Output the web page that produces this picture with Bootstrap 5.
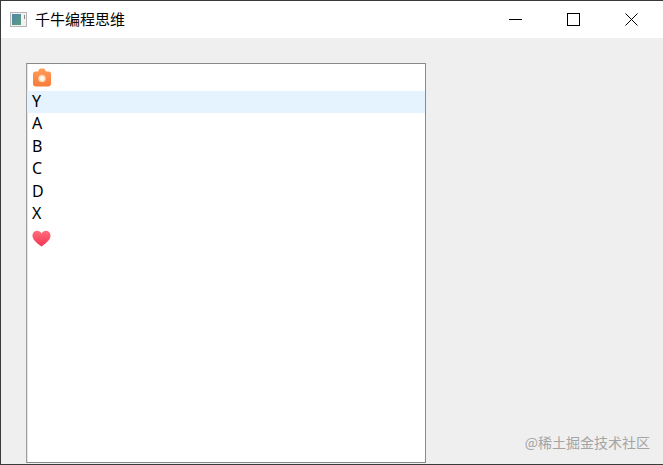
<!DOCTYPE html>
<html lang="zh">
<head>
<meta charset="utf-8">
<title>千牛编程思维</title>
<link rel="stylesheet" href="https://cdn.jsdelivr.net/npm/bootstrap@5.3.0/dist/css/bootstrap.min.css">
<style>
html,body{height:100%;margin:0;overflow:hidden}
body{background:#efefef;font-family:"Noto Sans","Noto Sans CJK SC",sans-serif;color:#000}
.win-frame{height:465px;width:663px;border:solid #3a3a3a;border-width:1px 0 1px 1px}
.title-bar{height:37px;background:#fff;padding-right:3px}
.app-ico{margin-left:9px;margin-right:8px}
.app-name{font-family:"Noto Sans CJK SC",sans-serif;font-size:15px;line-height:20px;margin-top:-1px}
.cap-btn{width:58px;height:37px}
.cap-btn svg{display:block}
.win-body{padding:25px 0 0 25px;height:426px}
.qlist{width:400px;height:400px;background:#fff;border:1px solid #8a8a8a;border-left-color:#a0a0a0;border-radius:0;box-shadow:inset 1px 0 0 #e4e4e4;padding-top:4px;font-family:"Noto Sans",sans-serif;font-size:16px;line-height:20px}
.qitem{height:22.500px;padding:0 0 0 5px;background:transparent;border:0;border-radius:0;color:#000}
.qitem.first{height:23px}
.qitem.on{height:22px;background:#e5f3ff}
.qitem.last{padding-top:4px}
.qitem svg{display:block}
.wm{position:absolute;right:13px;bottom:13px;font-family:"Noto Sans CJK SC",sans-serif;font-size:14px;line-height:18px;color:#a4a4a4}
</style>
</head>
<body>
<div class="win-frame position-relative d-flex flex-column">
  <div class="title-bar d-flex align-items-center">
    <svg class="app-ico" width="17" height="15" viewBox="0 0 17 15"><rect x=".5" y=".5" width="16" height="14" fill="#f2f2f2" stroke="#b5b5b5"/><defs><linearGradient id="ag" x1="0" y1="0" x2="1" y2="1"><stop offset="0" stop-color="#4f86b0"/><stop offset="1" stop-color="#5c9c78"/></linearGradient></defs><rect x="2" y="2" width="9" height="11" fill="url(#ag)"/><rect x="14" y="3" width="1" height="4" fill="#8a8a8a"/></svg>
    <span class="app-name flex-grow-1">千牛编程思维</span>
    <div class="cap-btn d-flex align-items-center justify-content-center"><svg width="13" height="13" viewBox="0 0 13 13"><path d="M0 6.500H13" stroke="#000"/></svg></div>
    <div class="cap-btn d-flex align-items-center justify-content-center"><svg width="13" height="13" viewBox="0 0 13 13"><rect x=".5" y=".5" width="12" height="12" fill="none" stroke="#000"/></svg></div>
    <div class="cap-btn d-flex align-items-center justify-content-center"><svg width="13" height="13" viewBox="0 0 13 13"><path d="M.5 .5L12.500 12.500M12.500 .5L.5 12.500" stroke="#000"/></svg></div>
  </div>
  <div class="win-body">
    <div class="qlist list-group">
      <div class="qitem first list-group-item"><svg width="20" height="19" viewBox="0 0 20 19"><defs><linearGradient id="cg" x1="0" y1="0" x2="0" y2="1"><stop offset="0" stop-color="#ff9d58"/><stop offset="1" stop-color="#f87a38"/></linearGradient><radialGradient id="lg"><stop offset=".45" stop-color="#fff6ea"/><stop offset="1" stop-color="#ffc79a"/></radialGradient></defs><path d="M3.500 3.500H6L7.200 1.200a1.500 1.500 0 0 1 1.300-.7h3a1.500 1.500 0 0 1 1.300.7L14 3.500h2.500A2.500 2.500 0 0 1 19 6v9.500a3 3 0 0 1-3 3H4a3 3 0 0 1-3-3V6a2.500 2.500 0 0 1 2.500-2.500z" fill="url(#cg)"/><circle cx="10" cy="10.500" r="3.800" fill="url(#lg)"/></svg></div>
      <div class="qitem on list-group-item">Y</div>
      <div class="qitem list-group-item">A</div>
      <div class="qitem list-group-item">B</div>
      <div class="qitem list-group-item">C</div>
      <div class="qitem list-group-item">D</div>
      <div class="qitem list-group-item">X</div>
      <div class="qitem last list-group-item"><svg width="19" height="17" viewBox="0 0 19 17"><defs><linearGradient id="hg" x1="0" y1="0" x2="0" y2="1"><stop offset="0" stop-color="#ff6f7d"/><stop offset="1" stop-color="#f2344f"/></linearGradient></defs><path d="M9.500 16.500C4 12.500.5 9.500.5 5.500.5 2.500 2.800.8 5 .8c2 0 3.500 1 4.500 2.700C10.500 1.800 12 .8 14 .8c2.200 0 4.500 1.700 4.500 4.700 0 4-3.500 7-9 11z" fill="url(#hg)"/></svg></div>
    </div>
  </div>
  <div class="wm">@稀土掘金技术社区</div>
</div>
</body>
</html>
